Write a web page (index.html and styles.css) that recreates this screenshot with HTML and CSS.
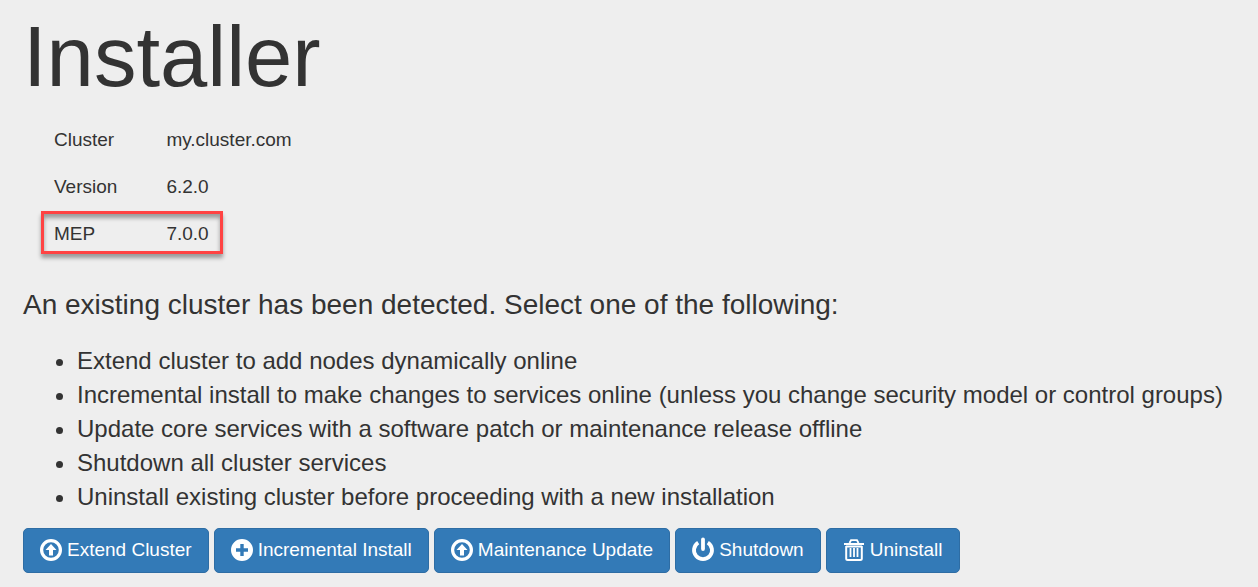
FILE: index.html
```html
<!DOCTYPE html>
<html lang="en">
<head>
<meta charset="utf-8">
<title>Installer</title>
<link rel="stylesheet" href="styles.css">
</head>
<body>
<main class="installer">
  <h1 class="title">Installer</h1>
  <table class="info">
    <tbody>
      <tr><th scope="row">Cluster</th><td>my.cluster.com</td></tr>
      <tr><th scope="row">Version</th><td>6.2.0</td></tr>
      <tr class="marked"><th scope="row">MEP</th><td><span class="marker"></span>7.0.0</td></tr>
    </tbody>
  </table>
  <h2 class="prompt">An existing cluster has been detected. Select one of the following:</h2>
  <ul class="options">
    <li>Extend cluster to add nodes dynamically online</li>
    <li>Incremental install to make changes to services online (unless you change security model or control groups)</li>
    <li>Update core services with a software patch or maintenance release offline</li>
    <li>Shutdown all cluster services</li>
    <li>Uninstall existing cluster before proceeding with a new installation</li>
  </ul>
  <div class="actions">
    <button type="button" class="btn"><svg class="icon" viewBox="0 0 22 22" aria-hidden="true"><circle cx="11" cy="11" r="9.400" fill="none" stroke="currentColor" stroke-width="3.200"/><path d="M11 5l5.500 6H13v5.500H9V11H5.500z" fill="currentColor"/></svg>Extend Cluster</button>
    <button type="button" class="btn"><svg class="icon" viewBox="0 0 22 22" aria-hidden="true"><path fill="currentColor" fill-rule="evenodd" d="M11 0a11 11 0 1 0 0 22a11 11 0 0 0 0-22zM9.300 5h3.400v4.300H17v3.400h-4.300V17H9.300v-4.300H5V9.300h4.300z"/></svg>Incremental Install</button>
    <button type="button" class="btn"><svg class="icon" viewBox="0 0 22 22" aria-hidden="true"><circle cx="11" cy="11" r="9.400" fill="none" stroke="currentColor" stroke-width="3.200"/><path d="M11 5l5.500 6H13v5.500H9V11H5.500z" fill="currentColor"/></svg>Maintenance Update</button>
    <button type="button" class="btn"><svg class="icon" viewBox="0 0 22 22" aria-hidden="true"><path d="M6.200 3.600a9 9 0 1 0 9.600 0" fill="none" stroke="currentColor" stroke-width="3.800"/><path d="M11 .5v9.500" fill="none" stroke="currentColor" stroke-width="3.800" stroke-linecap="round"/></svg>Shutdown</button>
    <button type="button" class="btn"><svg class="icon" viewBox="0 0 22 22" aria-hidden="true"><g fill="none" stroke="currentColor"><path d="M1 5h20" stroke-width="2"/><path d="M6.500 4l1.500-2.800h6L15.500 4" stroke-width="1.800"/><path d="M3 7.500h16M3.200 7v12.500q0 1.500 1.500 1.500h12.600q1.500 0 1.500-1.500V7" stroke-width="2"/><path d="M7.500 9v9M11 9v9M14.500 9v9" stroke-width="1.800"/></g></svg>Uninstall</button>
  </div>
</main>
</body>
</html>
```
FILE: styles.css
```css
body {
  margin: 0;
  background: #eee;
  color: #333;
  font-family: "Liberation Sans", Arial, sans-serif;
}
.installer { padding: 8px 12px 14px 23px; }
.title { margin: 0 0 20px; font-size: 85px; line-height: 98px; font-weight: 400; }
.info { margin: 0 0 21px 18px; border-collapse: collapse; font-size: 19px; line-height: 27px; }
.info th, .info td { padding: 0 13px 20px; font-weight: 400; text-align: left; }
.info td { padding-left: 36px; }
.prompt { margin: 0 0 22px; font-size: 28px; line-height: 34px; font-weight: 400; }
.options { margin: 0 0 14px; padding-left: 54px; font-size: 24px; line-height: 34px; }
.actions { display: flex; flex-wrap: wrap; gap: 5px; }
.btn {
  display: flex; align-items: center; gap: 5px; height: 45px; padding: 0 16px 1px;
  border: 1px solid #2e6da4; border-radius: 5px;
  background: #337ab7; color: #fff; font: 19px/20px "Liberation Sans", Arial, sans-serif;
}
.icon { width: 22px; height: 22px; overflow: visible; }
.marked { position: relative; }
.marker {
  position: absolute; top: -9px; bottom: 13px; left: 0; width: 176px;
  border: 3px solid #ff4343;
  box-shadow: 0 4px 4px rgba(0,0,0,.35), inset 0 4px 4px rgba(0,0,0,.35);
}
```
